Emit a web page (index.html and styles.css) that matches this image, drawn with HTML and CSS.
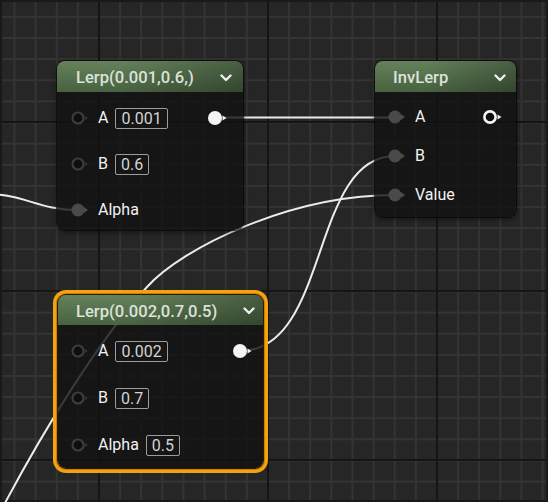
FILE: index.html
```html
<!DOCTYPE html>
<html>
<head>
<meta charset="utf-8">
<link rel="stylesheet" href="styles.css">
</head>
<body>
<div class="canvas">
  <svg class="wires" width="548" height="502" viewBox="0 0 548 502">
    <path d="M -10 194 C 25 195, 40 210, 78 210" />
    <path d="M 215 117.5 L 395 117.5" />
    <path d="M 240 351 C 330 351, 310 156, 395 156" />
    <path d="M 5 503 C 45 428, 97 343, 147 287 C 182 248, 290 195, 395 195" />
  </svg>

  <div class="node node-a">
    <div class="node-header">
      <span class="title">Lerp(0.001,0.6,)</span>
      <svg class="chev" width="12" height="8" viewBox="0 0 12 8"><polyline points="1.5,1.5 6,6 10.5,1.5"/></svg>
    </div>
    <div class="node-body rows-tall">
      <div class="row">
        <svg class="pin" width="18" height="14" viewBox="0 0 18 14"><circle class="open" cx="7" cy="7" r="5.5"/><polygon class="tri-dim" points="13.5,4.5 17,7 13.5,9.5"/></svg>
        <span class="label">A</span><span class="box">0.001</span>
        <svg class="pin-out" width="20" height="14" viewBox="0 0 20 14"><circle class="solid-white" cx="7" cy="7" r="7"/><polygon class="tri-white" points="14.5,4.5 18.5,7 14.5,9.5"/></svg>
      </div>
      <div class="row">
        <svg class="pin" width="18" height="14" viewBox="0 0 18 14"><circle class="open" cx="7" cy="7" r="5.5"/><polygon class="tri-dim" points="13.5,4.5 17,7 13.5,9.5"/></svg>
        <span class="label">B</span><span class="box">0.6</span>
      </div>
      <div class="row">
        <svg class="pin" width="18" height="14" viewBox="0 0 18 14"><circle class="linked" cx="7" cy="7" r="6.5"/><polygon class="tri-linked" points="13,4 17,7 13,10"/></svg>
        <span class="label">Alpha</span>
      </div>
    </div>
  </div>

  <div class="node node-b">
    <div class="node-header">
      <span class="title">InvLerp</span>
      <svg class="chev" width="12" height="8" viewBox="0 0 12 8"><polyline points="1.5,1.5 6,6 10.5,1.5"/></svg>
    </div>
    <div class="node-body rows-short">
      <div class="row">
        <svg class="pin" width="18" height="14" viewBox="0 0 18 14"><circle class="linked" cx="7" cy="7" r="6.5"/><polygon class="tri-linked" points="13,4 17,7 13,10"/></svg>
        <span class="label">A</span>
        <svg class="pin-out" width="20" height="14" viewBox="0 0 20 14"><circle class="ring-white" cx="7" cy="7" r="5.6"/><polygon class="tri-white" points="14.5,4.5 18.5,7 14.5,9.5"/></svg>
      </div>
      <div class="row">
        <svg class="pin" width="18" height="14" viewBox="0 0 18 14"><circle class="linked" cx="7" cy="7" r="6.5"/><polygon class="tri-linked" points="13,4 17,7 13,10"/></svg>
        <span class="label">B</span>
      </div>
      <div class="row">
        <svg class="pin" width="18" height="14" viewBox="0 0 18 14"><circle class="linked" cx="7" cy="7" r="6.5"/><polygon class="tri-linked" points="13,4 17,7 13,10"/></svg>
        <span class="label">Value</span>
      </div>
    </div>
  </div>

  <div class="node node-c selected">
    <div class="node-header">
      <span class="title">Lerp(0.002,0.7,0.5)</span>
      <svg class="chev" width="12" height="8" viewBox="0 0 12 8"><polyline points="1.5,1.5 6,6 10.5,1.5"/></svg>
    </div>
    <div class="node-body rows-tall-c">
      <div class="row">
        <svg class="pin" width="18" height="14" viewBox="0 0 18 14"><circle class="open" cx="7" cy="7" r="5.5"/><polygon class="tri-dim" points="13.5,4.5 17,7 13.5,9.5"/></svg>
        <span class="label">A</span><span class="box">0.002</span>
        <svg class="pin-out" width="20" height="14" viewBox="0 0 20 14"><circle class="solid-white" cx="7" cy="7" r="7"/><polygon class="tri-white" points="14.5,4.5 18.5,7 14.5,9.5"/></svg>
      </div>
      <div class="row">
        <svg class="pin" width="18" height="14" viewBox="0 0 18 14"><circle class="open" cx="7" cy="7" r="5.5"/><polygon class="tri-dim" points="13.5,4.5 17,7 13.5,9.5"/></svg>
        <span class="label">B</span><span class="box">0.7</span>
      </div>
      <div class="row">
        <svg class="pin" width="18" height="14" viewBox="0 0 18 14"><circle class="open" cx="7" cy="7" r="5.5"/><polygon class="tri-dim" points="13.5,4.5 17,7 13.5,9.5"/></svg>
        <span class="label">Alpha</span><span class="box">0.5</span>
      </div>
    </div>
  </div>
</div>
</body>
</html>
```

FILE: styles.css
```css
html, body {
  margin: 0;
  padding: 0;
  background: #262626;
}

.canvas {
  position: relative;
  width: 548px;
  height: 502px;
  overflow: hidden;
  font-family: Roboto, "Liberation Sans", sans-serif;
  background-color: #262626;
  background-image:
    linear-gradient(to right, #151515 0 2px, transparent 2px),
    linear-gradient(to bottom, #151515 0 2px, transparent 2px),
    linear-gradient(to right, #343434 0 2px, transparent 2px),
    linear-gradient(to bottom, #343434 0 2px, transparent 2px);
  background-size: 169px 100%, 100% 169px, 21.125px 100%, 100% 21.125px;
  background-position: 98px 0, 0 121px, 13.5px 0, 0 15.9px;
  box-shadow: inset 0 0 0 2px #191919;
}

.wires {
  position: absolute;
  left: 0;
  top: 0;
}

.wires path {
  fill: none;
  stroke: #ececec;
  stroke-width: 2;
  stroke-linecap: round;
}

.node {
  position: absolute;
  display: flex;
  flex-direction: column;
  border-radius: 8px;
  background: rgba(17, 18, 17, 0.82);
  box-shadow: 0 0 0 1px rgba(0, 0, 0, 0.6), 0 2px 6px rgba(0, 0, 0, 0.5);
}

.node-a { left: 57px; top: 61px; width: 186px; height: 169px; }
.node-b { left: 375px; top: 61px; width: 141px; height: 156px; }
.node-c { left: 58px; top: 295px; width: 205px; height: 173px; }

.node.selected {
  box-shadow: 0 0 0 1px #2a1a00, 0 0 0 2px #c97e00, 0 0 0 5px #f2a30f;
}

.node-header {
  display: flex;
  align-items: center;
  justify-content: space-between;
  height: 31px;
  box-sizing: border-box;
  padding: 2px 11px 0 19px;
  border-radius: 8px 8px 0 0;
  background:
    linear-gradient(to right, rgba(0, 0, 0, 0) 35%, rgba(0, 0, 0, 0.28)),
    linear-gradient(to bottom, rgba(108, 140, 98, 0.92), rgba(78, 106, 70, 0.9));
}

.node-c .node-header {
  height: 30px;
  padding-left: 18px;
  padding-right: 8px;
}

.node-b .node-header {
  padding-left: 18px;
  padding-right: 10px;
}

.title {
  color: #dde2da;
  font-size: 16.6px;
  font-weight: 500;
  white-space: nowrap;
}

.chev polyline {
  fill: none;
  stroke: #eeeeee;
  stroke-width: 2.4;
  stroke-linecap: round;
  stroke-linejoin: round;
}

.node-body {
  display: flex;
  flex-direction: column;
  padding-left: 14px;
}

.rows-tall { padding-top: 11px; gap: 16px; padding-right: 15px; }
.rows-tall .row { height: 30px; }
.rows-short { padding-top: 13px; gap: 15px; padding-left: 13px; padding-right: 13px; }
.rows-short .row { height: 24px; }
.rows-tall-c { padding-top: 11px; gap: 17px; padding-left: 13px; padding-right: 10px; }
.rows-tall-c .row { height: 30px; }

.row {
  display: flex;
  align-items: center;
}

.pin {
  flex: none;
  margin-right: 9px;
}

.pin-out {
  flex: none;
  margin-left: auto;
}

.open {
  fill: #0e0e0e;
  stroke: #3c3c3c;
  stroke-width: 2.2;
}

.tri-dim { fill: #323232; }

.linked { fill: #4a4a4a; }
.tri-linked { fill: #4a4a4a; }

.solid-white { fill: #f4f4f4; }
.tri-white { fill: #f4f4f4; }

.ring-white {
  fill: #0e0e0e;
  stroke: #f4f4f4;
  stroke-width: 2.6;
}

.label {
  color: #f2f2f2;
  font-size: 16px;
  line-height: 20px;
}

.box {
  margin-left: 7px;
  height: 21px;
  box-sizing: border-box;
  padding: 0 5px;
  border: 1px solid #9c9c9c;
  border-radius: 2px;
  color: #d4d4d4;
  font-size: 16px;
  line-height: 19px;
}
```
